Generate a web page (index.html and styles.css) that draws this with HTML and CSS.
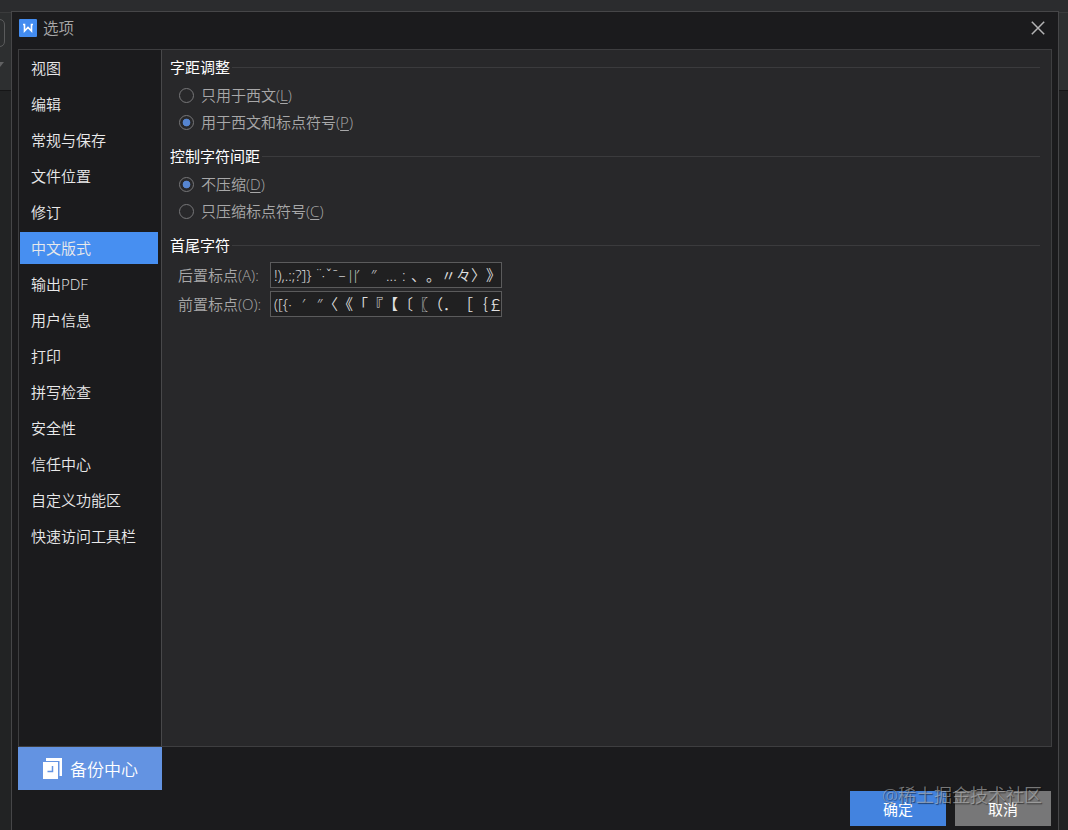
FILE: index.html
```
<!DOCTYPE html>
<html lang="zh-CN">
<head>
<meta charset="utf-8">
<title>选项</title>
<link rel="stylesheet" href="styles.css">
</head>
<body>
<div class="backdrop">
  <svg class="backdrop-art" width="1068" height="830" viewBox="0 0 1068 830" fill="none">
    <path d="M0 0H1068V12H0z" fill="#2b2c2e"/>
    <path d="M0 12.5H1068" stroke="#3a3b3c"/>
    <path d="M0 13H12V90H0zM1058 13H1068V90H1058z" fill="#2d2f30"/>
    <path d="M0 90.5H1068" stroke="#161617"/>
    <path d="M-6 19.5H0Q4.500 20 4.500 25V41Q4.500 46 0 46.500" stroke="#5a5b5c"/>
    <path d="M0 62H4L0 67z" fill="#606162"/>
  </svg>
  <section class="dialog">
    <header class="titlebar">
      <svg class="logo" width="18" height="18" viewBox="0 0 18 18">
        <rect width="18" height="18" rx="1" fill="#438cf0"/>
        <path d="M4 5.500H5.500V12L9 8.500L12.500 12V5.500H14" fill="none" stroke="#fff" stroke-width="1.600"/>
      </svg>
      <h1 class="title">选项</h1>
      <svg class="close" width="14" height="14" viewBox="0 0 14 14"><path d="M.8.8L13.200 13.200M13.200.8L.8 13.200" stroke="#b4b4b5" stroke-width="1.500"/></svg>
    </header>
    <div class="body">
      <nav class="sidebar">
        <a class="item">视图</a>
        <a class="item">编辑</a>
        <a class="item">常规与保存</a>
        <a class="item">文件位置</a>
        <a class="item">修订</a>
        <a class="item active">中文版式</a>
        <a class="item">输出PDF</a>
        <a class="item">用户信息</a>
        <a class="item">打印</a>
        <a class="item">拼写检查</a>
        <a class="item">安全性</a>
        <a class="item">信任中心</a>
        <a class="item">自定义功能区</a>
        <a class="item">快速访问工具栏</a>
      </nav>
      <main class="panel">
        <h2 class="group">字距调整</h2>
        <label class="option"><i class="radio"></i><span>只用于西文(<u>L</u>)</span></label>
        <label class="option"><i class="radio on"></i><span>用于西文和标点符号(<u>P</u>)</span></label>
        <h2 class="group">控制字符间距</h2>
        <label class="option"><i class="radio on"></i><span>不压缩(<u>D</u>)</span></label>
        <label class="option"><i class="radio"></i><span>只压缩标点符号(<u>C</u>)</span></label>
        <h2 class="group">首尾字符</h2>
        <div class="field"><span class="label">后置标点(A):</span><div class="input"><span class="lead-a">!),.:;?]}</span><span class="mark">¨</span><span class="dot">·</span><span class="mark">ˇ</span><span class="mark">ˉ</span><span class="mark">–</span><span class="bars">||</span><span class="quote">′</span><span class="quote">″</span><span class="dots">...</span><span class="ratio">:</span><span class="wide">、。〃々〉》</span></div></div>
        <div class="field"><span class="label">前置标点(O):</span><div class="input"><span class="lead-b">([{·</span><span class="quote right">′</span><span class="quote right">″</span><span class="wide">〈《「『【〔〖（．［｛￡</span></div></div>
      </main>
    </div>
    <footer class="footer">
      <button class="backup">
        <svg width="20" height="22" viewBox="0 0 20 22"><path d="M3 0H19V18H16.500V3H3z" fill="#fff"/><path d="M0 4H15V21H0z" fill="#fff"/><path d="M9.500 8V13.500H4.500" fill="none" stroke="#6393e2" stroke-width="1.500"/></svg>
        <span>备份中心</span>
      </button>
      <div class="actions">
        <button class="button primary">确定</button>
        <button class="button">取消</button>
        <span class="watermark">@稀土掘金技术社区</span>
      </div>
    </footer>
  </section>
</div>
</body>
</html>
```
FILE: styles.css
```
* { box-sizing: border-box; }
body {
  margin: 0;
  background: #222324;
  font-family: "Open Sans", "Noto Sans CJK SC", sans-serif;
  font-size: 15px;
  font-weight: 350;
  color: #e9e9ea;
}
.backdrop { position: relative; width: 1068px; height: 830px; padding: 11px 9px 0 11px; overflow: hidden; }
.backdrop-art { position: absolute; left: 0; top: 0; }
.dialog {
  position: relative;
  display: flex;
  flex-direction: column;
  height: 819px;
  padding: 0 6px;
  background: #1b1b1d;
  border: 1px solid #464648;
  border-bottom: 0;
}
.titlebar { display: flex; align-items: center; flex: none; height: 37px; padding: 0 7px 6px 1px; }
.title { flex: 1; margin: 0 0 0 6px; font-size: 15.500px; line-height: 30px; font-weight: 350; color: #a8a8a9; }
.close { display: block; }
.body { display: flex; flex: none; height: 698px; border: 1px solid #3e3e40; }
.sidebar { display: flex; flex-direction: column; width: 143px; padding: 2px 3px 0 1px; gap: 4px; border-right: 1px solid #48484a; }
.item { height: 32px; padding-left: 11px; line-height: 32px; white-space: nowrap; }
.item.active { background: #478ff1; }
.panel { flex: 1; padding: 7px 11px 0 8px; background: #28282a; }
.group { display: flex; align-items: center; gap: 2px; margin: 0; height: 21px; line-height: 21px; font-size: 15px; font-weight: 400; color: #fff; }
.group::after { content: ""; flex: 1; height: 1px; background: #3b3b3d; }
.option { display: flex; align-items: center; height: 27px; padding-left: 9px; color: #a8a8a9; }
.option span { margin-left: 7px; line-height: 27px; }
.option + .group { margin-top: 10px; }
.group + .option { margin-top: 4px; }
.radio { width: 15px; height: 15px; border: 1px solid #777779; border-radius: 50%; }
.radio.on { background: radial-gradient(circle, #5685d0 3.500px, transparent 4.200px); }
u { text-underline-offset: 2px; text-decoration-thickness: 1px; }
.field { display: flex; align-items: center; height: 29px; padding-left: 8px; color: #a8a8a9; }
.group + .field { margin-top: 4px; }
.label { width: 92px; white-space: nowrap; }
.input { display: flex; width: 232px; height: 26px; padding-left: 3px; line-height: 24px; background: #202021; border: 1px solid #5b5b5c; color: #e0e0e1; overflow: hidden; white-space: nowrap; }
.input span { flex: none; }
.lead-a { width: 41px; letter-spacing: -.05px; }
.mark { width: 6.500px; text-align: center; font-size: 14px; }
.dot { width: 4px; }
.bars { width: 11px; padding-left: 2px; font-size: 13px; letter-spacing: -2px; }
.quote { width: 15px; }
.right { padding-left: 9px; }
.dots { width: 16px; }
.ratio { width: 9px; }
.lead-b { width: 19px; }
.wide { font-family: "Noto Sans CJK SC", sans-serif; font-kerning: none; text-spacing-trim: space-all; font-feature-settings: "chws" 0, "halt" 0, "palt" 0; }
.footer { display: flex; justify-content: space-between; height: 83px; }
button { margin: 0; padding: 0; border: 0; font: inherit; color: #fff; }
.backup { display: flex; align-items: center; gap: 7px; width: 144px; height: 43px; padding-left: 25px; background: #6393e2; font-size: 17px; }
.actions { position: relative; display: flex; gap: 9px; margin: 44px 1px 0 0; }
.button { width: 96px; height: 35px; background: #777778; font-weight: 400; font-size: 15px; }
.primary { background: #4383df; }
.watermark { position: absolute; left: 32px; top: -10px; font-size: 18px; line-height: 28px; color: rgba(185, 185, 185, .6); text-shadow: 1px 1px 1px rgba(0, 0, 0, .5); white-space: nowrap; }
```
